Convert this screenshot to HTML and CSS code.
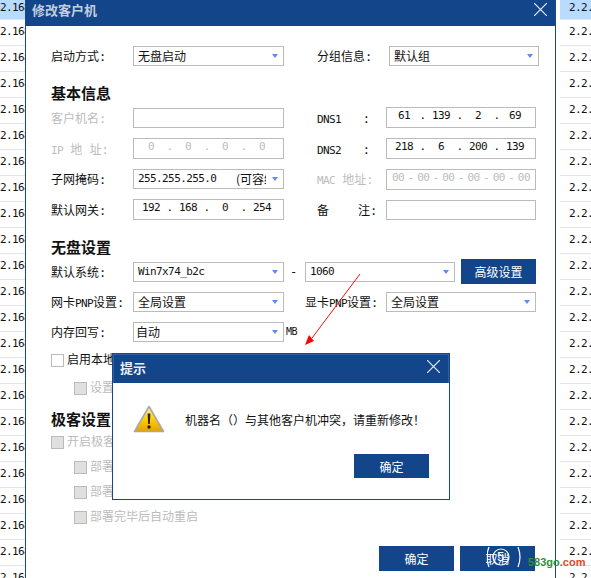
FILE: index.html
```html
<!DOCTYPE html>
<html lang="zh-CN">
<head>
    <meta charset="UTF-8">
    <title>修改客户机</title>
    <link rel="stylesheet" href="styles.css">
</head>
<body>

    <div class="list list-left">
        <div class="list-row selected">2.168</div>
        <div class="list-row">2.168</div>
        <div class="list-row">2.168</div>
        <div class="list-row">2.168</div>
        <div class="list-row">2.168</div>
        <div class="list-row">2.168</div>
        <div class="list-row">2.168</div>
        <div class="list-row">2.168</div>
        <div class="list-row">2.168</div>
        <div class="list-row">2.168</div>
        <div class="list-row">2.168</div>
        <div class="list-row">2.168</div>
        <div class="list-row">2.168</div>
        <div class="list-row">2.168</div>
        <div class="list-row">2.168</div>
        <div class="list-row">2.168</div>
        <div class="list-row">2.168</div>
        <div class="list-row">2.168</div>
        <div class="list-row">2.168</div>
        <div class="list-row">2.168</div>
        <div class="list-row">2.168</div>
        <div class="list-row">2.168</div>
        <div class="list-row">2.168</div>
    </div>

    <div class="window">
        <div class="titlebar">
            <span class="window-title">修改客户机</span>
            <svg class="close" width="13" height="13" viewBox="0 0 13 13"><path d="M0 0L13 13M13 0L0 13"/></svg>
        </div>

        <div class="window-body">
            <div class="row">
                <div class="cell">
                    <span class="label">启动方式:</span>
                    <div class="field select"><span>无盘启动</span></div>
                </div>
                <div class="cell cell-group">
                    <span class="label">分组信息:</span>
                    <div class="field select"><span>默认组</span></div>
                </div>
            </div>

            <h2 class="heading heading-basic">基本信息</h2>

            <div class="row row-end row-name">
                <div class="cell">
                    <span class="label muted">客户机名:</span>
                    <div class="field"></div>
                </div>
                <div class="cell cell-right">
                    <span class="label"><span class="latin">DNS1</span>   :</span>
                    <div class="field ip tall"><span>61</span><i>.</i><span>139</span><i>.</i><span>2</span><i>.</i><span>69</span></div>
                </div>
            </div>

            <div class="row row-end row-gap">
                <div class="cell">
                    <span class="label muted"><span class="latin">IP</span> 地 址:</span>
                    <div class="field ip tall muted"><span>0</span><i>.</i><span>0</span><i>.</i><span>0</span><i>.</i><span>0</span></div>
                </div>
                <div class="cell cell-right">
                    <span class="label"><span class="latin">DNS2</span>   :</span>
                    <div class="field ip tall"><span>218</span><i>.</i><span>6</span><i>.</i><span>200</span><i>.</i><span>139</span></div>
                </div>
            </div>

            <div class="row row-start row-gap">
                <div class="cell cell-top">
                    <span class="label">子网掩码:</span>
                    <div class="field select"><span class="latin mask">255.255.255.0</span><span class="mask-note">(可容纳</span></div>
                </div>
                <div class="cell cell-right cell-top">
                    <span class="label muted"><span class="latin">MAC</span> 地址:</span>
                    <div class="field mac tall muted"><span>00</span><i>-</i><span>00</span><i>-</i><span>00</span><i>-</i><span>00</span><i>-</i><span>00</span><i>-</i><span>00</span></div>
                </div>
            </div>

            <div class="row row-end row-last">
                <div class="cell">
                    <span class="label">默认网关:</span>
                    <div class="field ip tall"><span>192</span><i>.</i><span>168</span><i>.</i><span>0</span><i>.</i><span>254</span></div>
                </div>
                <div class="cell cell-right">
                    <span class="label">备    注:</span>
                    <div class="field"></div>
                </div>
            </div>

            <h2 class="heading heading-disk">无盘设置</h2>

            <div class="row">
                <div class="cell cell-narrow">
                    <span class="label">默认系统:</span>
                    <div class="field select"><span class="latin">Win7x74_b2c</span></div>
                    <span class="dash">-</span>
                    <div class="field select field-version"><span class="latin">1060</span></div>
                    <button class="btn btn-advanced">高级设置</button>
                </div>
            </div>

            <div class="row row-gap">
                <div class="cell cell-narrow">
                    <span class="label"><span>网卡</span><span class="latin">PNP</span><span>设置:</span></span>
                    <div class="field select"><span>全局设置</span></div>
                </div>
                <div class="cell cell-right cell-display">
                    <span class="label"><span>显卡</span><span class="latin">PNP</span><span>设置:</span></span>
                    <div class="field select"><span>全局设置</span></div>
                </div>
            </div>

            <div class="row row-gap">
                <div class="cell cell-narrow">
                    <span class="label">内存回写:</span>
                    <div class="field select field-auto"><span>自动</span></div>
                    <span class="latin unit">MB</span>
                </div>
            </div>

            <div class="check check-local"><span class="box"></span><span>启用本地</span></div>
            <div class="check check-sub check-local-sub muted"><span class="box box-off"></span><span>设置</span></div>

            <h2 class="heading heading-geek">极客设置</h2>

            <div class="check check-geek muted"><span class="box box-off"></span><span>开启极客</span></div>
            <div class="check check-sub check-deploy muted"><span class="box box-off"></span><span>部署</span></div>
            <div class="check check-sub check-deploy muted"><span class="box box-off"></span><span>部署</span></div>
            <div class="check check-sub check-deploy muted"><span class="box box-off"></span><span>部署完毕后自动重启</span></div>

            <div class="actions">
                <button class="btn">确定</button>
                <button class="btn">取消</button>
            </div>
        </div>
    </div>

    <div class="list list-right">
        <div class="list-row selected">2.2.</div>
        <div class="list-row">2.2.</div>
        <div class="list-row">2.2.</div>
        <div class="list-row">2.2.</div>
        <div class="list-row">2.2.</div>
        <div class="list-row">2.2.</div>
        <div class="list-row">2.2.</div>
        <div class="list-row">2.2.</div>
        <div class="list-row">2.2.</div>
        <div class="list-row">2.2.</div>
        <div class="list-row">2.2.</div>
        <div class="list-row">2.2.</div>
        <div class="list-row">2.2.</div>
        <div class="list-row">2.2.</div>
        <div class="list-row">2.2.</div>
        <div class="list-row">2.2.</div>
        <div class="list-row">2.2.</div>
        <div class="list-row">2.2.</div>
        <div class="list-row">2.2.</div>
        <div class="list-row">2.2.</div>
        <div class="list-row">2.2.</div>
        <div class="list-row">2.2.</div>
        <div class="list-row">2.2.</div>
    </div>

    <!-- Prompt on top of the form -->
    <div class="dialog">
        <div class="dialog-title">
            <span>提示</span>
            <svg class="close" width="13" height="13" viewBox="0 0 13 13"><path d="M0 0L13 13M13 0L0 13"/></svg>
        </div>
        <div class="dialog-body">
            <svg class="warn" width="32" height="28" viewBox="0 0 32 28">
                <defs>
                    <linearGradient id="warn-fill" x1="0" y1="0" x2="0" y2="1">
                        <stop offset="0" stop-color="#fff6a0"/>
                        <stop offset="0.5" stop-color="#ffd000"/>
                        <stop offset="1" stop-color="#e8a000"/>
                    </linearGradient>
                </defs>
                <path d="M16 1.5L30.5 26.5H1.5Z" fill="url(#warn-fill)" stroke="#a8a8a8" stroke-width="1.6" stroke-linejoin="round"/>
                <path d="M14.6 8.5h2.8l-.6 10.5h-1.6Z" fill="#222"/>
                <circle cx="16" cy="22" r="1.7" fill="#222"/>
            </svg>
            <span class="message">机器名（）与其他客户机冲突，请重新修改！</span>
        </div>
        <button class="btn btn-ok">确定</button>
    </div>

    <!-- Annotation drawn on the screenshot -->
    <svg class="arrow" width="60" height="76" viewBox="0 0 60 76">
        <path d="M56 1L8 65" stroke="#f01010" stroke-width="1" fill="none"/>
        <path d="M1 72L5 62L10 68Z" fill="#f80000"/>
    </svg>

    <svg class="stamp" width="50" height="36" viewBox="0 0 50 36">
        <circle cx="14" cy="19" r="8" fill="none" stroke="#fff" stroke-width="1.2"/>
        <path d="M2 9Q-2 19 2 29M31 9Q35 19 31 29" fill="none" stroke="#fff" stroke-width="1.2"/>
        <text x="10" y="23" class="stamp-digit">5</text>
    </svg>
    <div class="watermark"><span class="wm-green">583go</span><span class="wm-red">.com</span></div>

</body>
</html>
```

FILE: styles.css
```css
body {
    margin: 0;
    height: 100vh;
    overflow: hidden;
    display: flex;
    position: relative;
    background-color: #fff;
    color: #111;
    font-family: "DejaVu Sans Mono", "Noto Sans CJK SC", monospace;
    font-size: 12px;
}

/* List behind the window */
.list {
    flex: none;
    overflow: hidden;
}

.list-left {
    width: 25px;
}

.list-right {
    width: 31px;
    padding-left: 4px;
}

.list-row {
    box-sizing: border-box;
    height: 26px;
    padding-top: 5px;
    border-bottom: 1px solid #e2e2ee;
    font-size: 11px;
    line-height: 14px;
    letter-spacing: -0.6px;
    white-space: nowrap;
}

.list-row.selected {
    height: 20px;
    padding-top: 1px;
    background-color: #b7dcff;
    border-bottom-color: #dfe6f2;
}

.list-right .list-row {
    padding-left: 9px;
}

/* Main window */
.window {
    flex: none;
    box-sizing: border-box;
    width: 531px;
    height: 578px;
    border-left: 1px solid #134a8e;
    border-right: 1px solid #134a8e;
    background-color: #fff;
}

.titlebar {
    box-sizing: border-box;
    height: 26px;
    display: flex;
    justify-content: space-between;
    align-items: flex-start;
    padding: 3px 8px 0 6px;
    background-color: #124589;
}

.window-title {
    font-family: "Noto Sans CJK SC", sans-serif;
    font-size: 13px;
    font-weight: bold;
    line-height: 14px;
    color: #c3cedd;
}

.close path {
    stroke: #e8eef6;
    stroke-width: 1.2;
    fill: none;
}

.window-body {
    padding: 20px 0 0 25px;
}

/* Form rows */
.row {
    display: flex;
    height: 20px;
    align-items: flex-start;
}

.row-end {
    height: 21px;
    align-items: flex-end;
}

.row-start {
    height: 21px;
}

.row-name {
    margin-top: 5px;
}

.row-gap {
    margin-top: 10px;
}

.row-last {
    margin-top: 9px;
}

.cell {
    flex: none;
    width: 266px;
    display: flex;
    align-items: center;
    white-space: pre;
}

.cell-top {
    align-items: flex-start;
}

.cell-narrow {
    width: 254px;
}

.label {
    flex: none;
    display: block;
    width: 82px;
    height: 20px;
    line-height: 22px;
}

.cell-right .label {
    width: 69px;
}

.cell-group .label {
    width: 72px;
}

.cell-display .label {
    width: 81px;
}

.latin {
    font-size: 11px;
    letter-spacing: -0.6px;
}

.muted {
    color: #bcbcbc;
}

.field {
    flex: none;
    box-sizing: border-box;
    width: 151px;
    height: 20px;
    padding: 0 5px 0 4px;
    border: 1px solid #bbb;
    display: flex;
    align-items: center;
    line-height: 18px;
    overflow: hidden;
}

.cell-right .field,
.cell-group .field {
    width: 150px;
}

.tall {
    height: 21px;
}

.select {
    position: relative;
    font-family: "Noto Sans CJK SC", "DejaVu Sans Mono", sans-serif;
}

.select .latin {
    font-family: "DejaVu Sans Mono", monospace;
}

.select::after {
    content: "";
    position: absolute;
    right: 5px;
    top: 7px;
    border-top: 4px solid #5b8cf2;
    border-left: 3px solid transparent;
    border-right: 3px solid transparent;
}

.mask {
    flex: none;
    width: 98px;
}

.mask-note {
    flex: none;
    width: 30px;
    overflow: hidden;
}

.field-auto {
    padding-left: 2px;
}

.ip {
    padding: 0 0 3px 5px;
    font-size: 11px;
    letter-spacing: -0.6px;
}

.ip span {
    flex: none;
    width: 24px;
    text-align: center;
}

.ip i {
    flex: none;
    width: 13px;
    font-style: normal;
    text-align: center;
}

.mac {
    justify-content: space-between;
    padding: 0 5px 3px 5px;
    font-size: 11px;
    letter-spacing: -0.6px;
}

.mac i {
    font-style: normal;
}

.dash {
    flex: none;
    width: 21px;
    padding-left: 6px;
    box-sizing: border-box;
    line-height: 20px;
}

.field-version {
    width: 150px;
}

.btn {
    flex: none;
    box-sizing: border-box;
    width: 75px;
    height: 25px;
    padding: 0;
    border: none;
    background-color: #124589;
    color: #fff;
    font-family: "Noto Sans CJK SC", sans-serif;
    font-size: 12px;
}

.btn-advanced {
    margin: -3px 0 -2px 6px;
}

.unit {
    flex: none;
    margin-left: 2px;
    line-height: 20px;
    font-size: 10px;
}

.heading {
    margin: 0;
    height: 18px;
    font-family: "Noto Sans CJK SC", sans-serif;
    font-size: 15px;
    font-weight: bold;
    line-height: 18px;
}

.heading-basic {
    margin-top: 18px;
}

.heading-disk {
    margin-top: 18px;
    margin-bottom: 6px;
}

.heading-geek {
    margin-top: 15px;
    margin-bottom: 8px;
}

/* Checkboxes */
.check {
    display: flex;
    align-items: center;
    gap: 3px;
    height: 13px;
    line-height: 13px;
}

.check-local {
    margin-top: 12px;
}

.check-sub {
    margin-left: 23px;
}

.check-local-sub {
    margin-top: 15px;
}

.check-deploy {
    margin-top: 12px;
}

.box {
    flex: none;
    box-sizing: border-box;
    width: 13px;
    height: 13px;
    border: 1px solid #bbb;
    background-color: #fff;
}

.box-off {
    background-color: #e0e0e0;
}

.actions {
    display: flex;
    gap: 6px;
    margin: 22px 0 0 328px;
}

/* Prompt dialog */
.dialog {
    position: absolute;
    left: 112px;
    top: 353px;
    box-sizing: border-box;
    width: 338px;
    height: 147px;
    border: 1px solid #134a8e;
    background-color: #fff;
}

.dialog-title {
    height: 29px;
    display: flex;
    justify-content: space-between;
    align-items: flex-start;
    padding: 5px 8px 0 6px;
    background-color: #124589;
    border: 1px solid #2f5f9f;
    border-bottom: none;
    box-sizing: border-box;
    color: #e8edf5;
    font-family: "Noto Sans CJK SC", sans-serif;
    font-size: 13px;
    font-weight: bold;
    line-height: 16px;
}

.dialog-body {
    display: flex;
    align-items: center;
    padding: 22px 0 0 20px;
}

.warn {
    flex: none;
}

.message {
    margin-left: 20px;
    font-family: "Noto Sans CJK SC", sans-serif;
    font-size: 12px;
    white-space: nowrap;
}

.btn-ok {
    display: block;
    height: 24px;
    margin: 21px 0 0 241px;
}

/* Things drawn over the screenshot */
.arrow {
    position: absolute;
    left: 304px;
    top: 273px;
}

.stamp {
    position: absolute;
    left: 487px;
    top: 538px;
}

.stamp-digit {
    fill: #fff;
    font-family: "Liberation Sans", sans-serif;
    font-size: 13px;
}

.watermark {
    position: absolute;
    left: 528px;
    top: 556px;
    font-family: "Liberation Sans", sans-serif;
    font-size: 11px;
    font-weight: bold;
    line-height: 13px;
    white-space: nowrap;
}

.wm-green {
    color: #2f8f3c;
}

.wm-red {
    color: #e4472b;
}
```
